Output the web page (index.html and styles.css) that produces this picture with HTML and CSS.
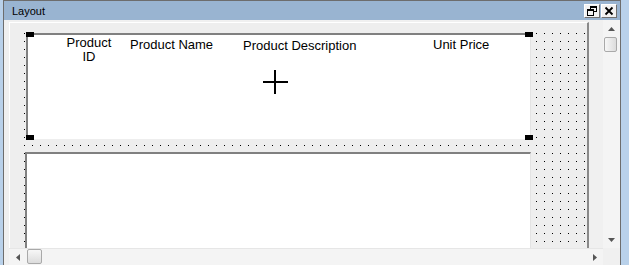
FILE: index.html
```html
<!DOCTYPE html>
<html lang="en">
<head>
    <meta charset="UTF-8">
    <title>Layout</title>
    <link rel="stylesheet" href="styles.css">
</head>
<body>
    <div class="frame">
        <div class="win">
            <div class="titlebar">
                <span class="title">Layout</span>
                <div class="caption-btns">
                    <div class="cap-btn">
                        <svg width="14" height="12" viewBox="0 0 14 12">
                            <rect x="5" y="1" width="7" height="2" fill="#000"/>
                            <rect x="11" y="1" width="1" height="6" fill="#000"/>
                            <rect x="9" y="6" width="3" height="1" fill="#000"/>
                            <rect x="5" y="1" width="1" height="3" fill="#000"/>
                            <rect x="2" y="4" width="7" height="2" fill="#000"/>
                            <rect x="2" y="4" width="1" height="7" fill="#000"/>
                            <rect x="8" y="4" width="1" height="7" fill="#000"/>
                            <rect x="2" y="10" width="7" height="1" fill="#000"/>
                        </svg>
                    </div>
                    <div class="cap-btn">
                        <svg width="14" height="12" viewBox="0 0 14 12">
                            <path d="M3.5 2.5 L10.5 9.5 M10.5 2.5 L3.5 9.5" stroke="#000" stroke-width="1.8"/>
                        </svg>
                    </div>
                </div>
            </div>

            <div class="body">
                <div class="main">
                    <div class="content">
                        <div class="formarea">
                            <div class="surface">
                                <!-- page header section, selected -->
                                <div class="section1">
                                    <span class="handle tl"></span>
                                    <span class="handle tr"></span>
                                    <span class="handle bl"></span>
                                    <span class="handle br"></span>

                                    <div class="field f-id">Product ID</div>
                                    <div class="field f-name">Product Name</div>
                                    <div class="field f-desc">Product Description</div>
                                    <div class="field f-price">Unit Price</div>

                                    <svg class="cross" width="25" height="24" viewBox="0 0 25 24">
                                        <rect x="0" y="11" width="25" height="2" fill="#000"/>
                                        <rect x="11" y="0" width="2" height="24" fill="#000"/>
                                    </svg>
                                </div>

                                <!-- detail section -->
                                <div class="section2"></div>
                            </div>
                        </div>
                    </div>

                    <div class="vscroll">
                        <div class="sb-btn">
                            <svg width="7" height="4" viewBox="0 0 7 4"><path d="M0 4 L7 4 L3.5 0 Z" fill="#555"/></svg>
                        </div>
                        <div class="vthumb"></div>
                        <div class="track"></div>
                        <div class="sb-btn">
                            <svg width="7" height="4" viewBox="0 0 7 4"><path d="M0 0 L7 0 L3.5 4 Z" fill="#555"/></svg>
                        </div>
                    </div>
                </div>

                <div class="hbar-row">
                    <div class="hscroll">
                        <div class="sb-btn wide">
                            <svg width="4" height="7" viewBox="0 0 4 7"><path d="M4 0 L4 7 L0 3.5 Z" fill="#555"/></svg>
                        </div>
                        <div class="hthumb"></div>
                        <div class="track"></div>
                        <div class="sb-btn wide">
                            <svg width="4" height="7" viewBox="0 0 4 7"><path d="M0 0 L0 7 L4 3.5 Z" fill="#555"/></svg>
                        </div>
                    </div>
                    <div class="corner"></div>
                </div>
            </div>
        </div>
    </div>
</body>
</html>
```

FILE: styles.css
```css
body {
    margin: 0;
    background-color: #b9d1ea;
    font-family: "Liberation Sans", Arial, sans-serif;
}

.frame {
    width: 629px;
    height: 265px;
    overflow: hidden;
    padding-left: 3px;
    box-sizing: border-box;
}

.win {
    width: 618px;
    height: 266px;
    border: 1px solid #6d6d6d;
    border-bottom: none;
    box-sizing: border-box;
    background-color: #f0f0f0;
    display: flex;
    flex-direction: column;
}

/* title bar */
.titlebar {
    height: 19px;
    flex-shrink: 0;
    background-color: #99b4d1;
    display: flex;
    align-items: flex-start;
    padding: 3px 3px 0 8px;
    box-sizing: border-box;
}

.title {
    flex: 1;
    font-size: 11px;
    line-height: 13px;
    margin-top: 1px;
    color: #000;
}

.caption-btns {
    display: flex;
    gap: 1px;
}

.cap-btn {
    width: 16px;
    height: 14px;
    box-sizing: border-box;
    background-color: #f2f2f2;
    border: 1px solid;
    border-color: #ffffff #707070 #707070 #ffffff;
    display: flex;
}

/* client area */
.body {
    flex: 1;
    display: flex;
    flex-direction: column;
    padding-left: 5px;
}

.main {
    display: flex;
    height: 228px;
}

.content {
    width: 594px;
    overflow: hidden;
}

.formarea {
    margin-top: 2px;
    width: 580px;
    height: 300px;
    box-sizing: border-box;
    border-top: 1px solid #ffffff;
    border-left: 1px solid #ffffff;
    border-right: 2px solid #8a8a8a;
    background-color: #eeeeee;
    padding: 9px 0 0 10px;
}

/* design grid: one black pixel every 8px */
.surface {
    height: 100%;
    background-color: #eeeeee;
    background-image:
        linear-gradient(to right, transparent 1px, #eeeeee 1px),
        linear-gradient(to bottom, #000 1px, transparent 1px);
    background-size: 8px 8px;
    background-position: 4px 1px;
    display: flex;
    flex-direction: column;
    align-items: flex-start;
}

.section1 {
    position: relative;
    flex-shrink: 0;
    margin: 1px 0 0 6px;
    width: 505px;
    height: 106px;
    box-sizing: border-box;
    background-color: #fff;
    border-top: 2px solid #808080;
    border-left: 2px solid #808080;
    border-right: 1px solid #e3e3e3;
    border-bottom: 1px solid #ffffff;
}

.section2 {
    flex-shrink: 0;
    margin: 13px 0 0 5px;
    width: 506px;
    height: 120px;
    box-sizing: border-box;
    background-color: #fff;
    border-top: 2px solid #808080;
    border-left: 2px solid #808080;
    border-right: 1px solid #e3e3e3;
}

/* sizing handles */
.handle {
    position: absolute;
    width: 8px;
    height: 5px;
    background-color: #000;
}
.tl { left: -2px; top: -3px; }
.tr { right: -3px; top: -3px; }
.bl { left: -2px; bottom: -2px; }
.br { right: -3px; bottom: -2px; }

/* label controls */
.field {
    position: absolute;
    font-size: 13px;
    line-height: 14px;
    color: #000;
    white-space: nowrap;
}
.f-id {
    left: 31px;
    top: 1px;
    width: 60px;
    text-align: center;
    white-space: normal;
}
.f-name { left: 102px; top: 3px; }
.f-desc { left: 215px; top: 4px; }
.f-price { left: 405px; top: 3px; }

.cross {
    position: absolute;
    left: 235px;
    top: 35px;
}

/* scrollbars */
.vscroll {
    width: 17px;
    display: flex;
    flex-direction: column;
    background-color: #f4f4f4;
}

.sb-btn {
    height: 17px;
    flex-shrink: 0;
    display: flex;
    align-items: center;
    justify-content: center;
}
.sb-btn.wide {
    width: 17px;
    height: auto;
}

.track {
    flex: 1;
}

.vthumb {
    margin-left: 1px;
    width: 13px;
    height: 15px;
    box-sizing: border-box;
    border: 1px solid #a9a9a9;
    border-radius: 2px;
    background: linear-gradient(to right, #f7f7f7, #dcdcdc);
}

.hbar-row {
    display: flex;
    height: 17px;
}

.hscroll {
    width: 594px;
    display: flex;
    box-sizing: border-box;
    border-top: 1px solid #e6e6e6;
    background-color: #f4f4f4;
}

.hthumb {
    margin-left: 1px;
    width: 15px;
    height: 15px;
    box-sizing: border-box;
    border: 1px solid #a9a9a9;
    border-radius: 2px;
    background: linear-gradient(to bottom, #f7f7f7, #dcdcdc);
}

.corner {
    flex: 1;
    background-color: #f0f0f0;
}
```
